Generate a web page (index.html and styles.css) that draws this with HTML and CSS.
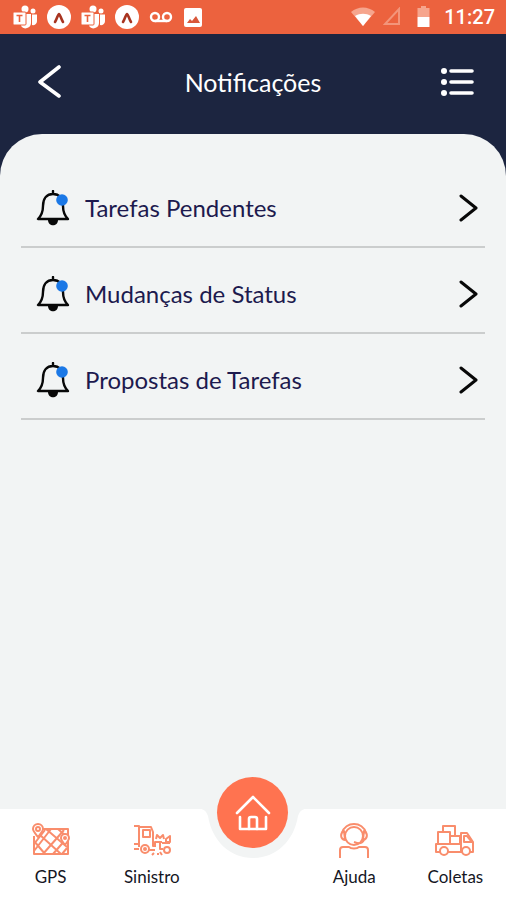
FILE: index.html
```html
<!DOCTYPE html>
<html lang="pt-BR">
<head>
    <meta charset="UTF-8">
    <meta name="viewport" content="width=device-width, initial-scale=1.0">
    <title>Notificações</title>
    <link rel="stylesheet" href="styles.css">
</head>
<body>
    <svg class="sprite" aria-hidden="true">
        <symbol id="teams" viewBox="0 0 24 24">
            <circle cx="12" cy="4" r="3.5" fill="#fff"/>
            <circle cx="20" cy="6" r="2.5" fill="#fff"/>
            <path d="M10 9h8v9a5.500 5.500 0 0 1-10 3z" fill="#fff"/>
            <path d="M19 9.500h5V16a4 4 0 0 1-5 4z" fill="#fff"/>
            <rect x="0" y="7" width="13" height="13" rx="1" fill="#fff" stroke="#ec623e"/>
            <path d="M3.500 10.500h6M6.500 10.500v6.500" stroke="#ec623e" stroke-width="1.600" fill="none"/>
        </symbol>
        <symbol id="expo" viewBox="0 0 24 24">
            <circle cx="12" cy="12" r="12" fill="#fff"/>
            <path d="M8 17c2-3 3-8 4-8s2 5 4 8" fill="none" stroke="#a83420" stroke-width="2.600" stroke-linecap="round" stroke-linejoin="round"/>
        </symbol>
        <symbol id="bell" viewBox="0 0 34 36">
            <path d="M17 1v3M2 29h30c-4-4-5-7-5-13C27 8 23 4 17 4S7 8 7 16c0 6-1 9-5 13z" fill="none" stroke="#080808" stroke-width="2.400" stroke-linecap="round" stroke-linejoin="round"/>
            <path d="M12 30h10c0 7-10 7-10 0z" fill="#080808"/>
            <circle cx="26" cy="10" r="5.800" fill="#1b78e6"/>
        </symbol>
        <symbol id="chevron" viewBox="0 0 20 28">
            <path d="M3 2l15 12L3 26" fill="none" stroke="currentColor" stroke-width="3" stroke-linecap="round" stroke-linejoin="round"/>
        </symbol>
    </svg>

    <div class="status-bar">
        <div class="status-icons">
            <svg width="24" height="24"><use href="#teams"/></svg>
            <svg width="24" height="24"><use href="#expo"/></svg>
            <svg width="24" height="24"><use href="#teams"/></svg>
            <svg width="24" height="24"><use href="#expo"/></svg>
            <svg width="24" height="24" viewBox="0 0 24 24" fill="none" stroke="#fff" stroke-width="2.400">
                <circle cx="6" cy="12" r="4"/>
                <circle cx="18" cy="12" r="4"/>
                <path d="M6 16h12"/>
            </svg>
            <svg width="20" height="24" viewBox="0 0 20 24">
                <rect x="1" y="3" width="18" height="19" rx="2" fill="#fff"/>
                <path d="M4 18l3-4 2 2 4-5 4 7z" fill="#d9573a"/>
            </svg>
        </div>
        <div class="status-info">
            <svg width="24" height="20" viewBox="0 0 24 20">
                <path d="M0 5C7-1 17-1 24 5L12 19z" fill="#f6a58d"/>
                <path d="M4 9c5-3 11-3 16 0l-8 10z" fill="#fff"/>
            </svg>
            <svg width="18" height="20" viewBox="0 0 18 20">
                <path d="M16 2v15H2z" fill="none" stroke="#f3957a" stroke-width="2"/>
            </svg>
            <svg class="battery" width="13" height="22" viewBox="0 0 13 22">
                <path d="M4 0h5v2h3.500v9H.500V2H4z" fill="#f6a58d"/>
                <path d="M.500 11h12v10H.500z" fill="#fff"/>
            </svg>
            <time class="clock">11:27</time>
        </div>
    </div>

    <header class="header">
        <button class="icon-button" type="button" aria-label="Voltar">
            <svg width="24" height="36" viewBox="0 0 24 36" fill="none" stroke="#fff" stroke-width="3.600" stroke-linecap="round" stroke-linejoin="round">
                <path d="M22 3L3 18l19 14"/>
            </svg>
        </button>
        <h1 class="title">Notificações</h1>
        <button class="icon-button" type="button" aria-label="Menu">
            <svg width="34" height="30" viewBox="0 0 34 30" fill="#fff">
                <circle cx="4" cy="4" r="3"/>
                <circle cx="4" cy="15" r="3"/>
                <circle cx="4" cy="26" r="3"/>
                <path d="M11 4h21M11 15h21M11 26h21" stroke="#fff" stroke-width="3.600" stroke-linecap="round"/>
            </svg>
        </button>
    </header>

    <main class="panel">
        <ul class="list">
            <li>
                <a class="row" href="#pendentes">
                    <svg width="34" height="36"><use href="#bell"/></svg>
                    <span class="label">Tarefas Pendentes</span>
                    <svg class="chevron" width="20" height="28"><use href="#chevron"/></svg>
                </a>
            </li>
            <li>
                <a class="row" href="#status">
                    <svg width="34" height="36"><use href="#bell"/></svg>
                    <span class="label">Mudanças de Status</span>
                    <svg class="chevron" width="20" height="28"><use href="#chevron"/></svg>
                </a>
            </li>
            <li>
                <a class="row" href="#propostas">
                    <svg width="34" height="36"><use href="#bell"/></svg>
                    <span class="label">Propostas de Tarefas</span>
                    <svg class="chevron" width="20" height="28"><use href="#chevron"/></svg>
                </a>
            </li>
        </ul>
    </main>

    <nav class="tabs">
        <a class="tab" href="#gps">
            <svg width="40" height="36" viewBox="0 0 40 36">
                <path d="M8 6h29v25H3V13" stroke-width="2"/>
                <path d="M3 21l11-14M3 28L20 6M12 31L33 7M22 31l14-16M31 31l5-6M9 12l21 19M15 6l21 18M3 18l11 13M27 6l9 8"/>
                <path d="M7 14C3 9 2 8 2 6a5 5 0 0 1 10 0c0 2-1 3-5 8z" fill="#fff"/>
                <circle cx="7" cy="6" r="2"/>
                <path d="M34 22c-3-4-4-5-4-7a4 4 0 0 1 8 0c0 2-1 3-4 7z" fill="#fff"/>
                <circle cx="34" cy="15" r="1"/>
            </svg>
            GPS
        </a>
        <a class="tab" href="#sinistro">
            <svg width="40" height="36" viewBox="0 0 40 36">
                <path d="M2 3h5v18H2M7 4h12l2 5v14h3M7 21v3M2 26h5M17 27h6"/>
                <path d="M11 7h7v7h-7z"/>
                <circle cx="13" cy="26" r="4"/>
                <circle cx="13" cy="26" r="1"/>
                <path d="M24 16l1-4 3 3 3-3 1 4M23 24v-5h7M28 19v7h3M38 13l-4 3v3h4zM30 20h8"/>
                <circle cx="35" cy="27" r="3"/>
                <path d="M20 32l2-2M25 31h2M28 29l2 3"/>
            </svg>
            Sinistro
        </a>
        <div class="home-cell">
            <svg class="notch" width="106" height="50" viewBox="0 0 106 50">
                <path d="M0 0c4 0 6 2 8 7 4 25 22 42 45 42s41-17 45-42c2-5 4-7 8-7z" fill="#f2f4f4"/>
            </svg>
            <button class="home" type="button" aria-label="Início">
                <svg width="36" height="38" viewBox="0 0 36 38" fill="none" stroke="#fff" stroke-width="2.600" stroke-linecap="round" stroke-linejoin="round">
                    <path d="M2 19L18 3l16 16"/>
                    <path d="M5 23v12h26V23"/>
                    <path d="M14 35V25q0-2 2-2h4q2 0 2 2v10"/>
                </svg>
            </button>
        </div>
        <a class="tab" href="#ajuda">
            <svg width="40" height="36" viewBox="0 0 40 36">
                <circle cx="20" cy="13" r="9"/>
                <path d="M8 10C11-2 29-2 32 10"/>
                <path d="M10 8c-4 2-4 8 1 9zM30 8c4 2 4 8-1 9zM30 17c-2 4-5 4-10 2"/>
                <path d="M6 35v-8c0-2 1-3 3-3h6c2 2 8 2 10 0h6c2 0 3 1 3 3v8"/>
            </svg>
            Ajuda
        </a>
        <a class="tab" href="#coletas">
            <svg width="40" height="36" viewBox="0 0 40 36">
                <path d="M3 21V9h12v12M15 13h10v8M8 9V3h12v10"/>
                <path d="M5 29H1v-8h25M13 29h14M26 29V10h6l6 9v10h-3"/>
                <path d="M29 13v6h8l-5-6z"/>
                <circle cx="9" cy="28" r="4"/>
                <circle cx="31" cy="28" r="4"/>
            </svg>
            Coletas
        </a>
    </nav>
</body>
</html>
```

FILE: styles.css
```css
* {
    box-sizing: border-box;
}
body {
    margin: 0;
    min-height: 100vh;
    display: flex;
    flex-direction: column;
    background-color: #1c2540;
    font-family: Lato, sans-serif;
}
.sprite {
    position: absolute;
    width: 0;
    height: 0;
}
svg {
    display: block;
    flex-shrink: 0;
}
.status-bar {
    display: flex;
    justify-content: space-between;
    align-items: center;
    height: 34px;
    padding: 0 11px 0 13px;
    background-color: #ec623e;
}
.status-icons {
    display: flex;
    align-items: center;
    gap: 10px;
}
.status-info {
    display: flex;
    align-items: center;
    gap: 8px;
}
.battery {
    margin: 0 6px 0 8px;
}
.clock {
    color: #fff;
    font-family: Roboto, sans-serif;
    font-size: 20px;
    font-weight: 500;
    line-height: 24px;
}
.header {
    display: flex;
    justify-content: space-between;
    align-items: center;
    height: 100px;
    padding: 0 26px 4px;
}
.icon-button {
    display: flex;
    justify-content: center;
    width: 46px;
    padding: 0;
    border: none;
    background: none;
    cursor: pointer;
}
.title {
    margin: 0;
    color: #fff;
    font-size: 25px;
    font-weight: 400;
    line-height: 32px;
}
.panel {
    flex: 1;
    padding: 28px 21px;
    border-radius: 42px 42px 0 0;
    background-color: #f2f4f4;
}
.list {
    margin: 0;
    padding: 0;
    list-style: none;
}
.row {
    display: flex;
    align-items: center;
    min-height: 86px;
    padding: 8px 7px 0 15px;
    border-bottom: 2px solid #cbcdcd;
    color: #1d1a4e;
    font-size: 24px;
    line-height: 30px;
    text-decoration: none;
}
.label {
    flex: 1;
    margin-left: 15px;
}
.chevron {
    color: #080808;
}
.tabs {
    display: grid;
    grid-template-columns: repeat(5, 1fr);
    min-height: 91px;
    background-color: #fff;
}
.tab {
    display: flex;
    flex-direction: column;
    align-items: center;
    gap: 8px;
    padding-top: 14px;
    color: #15161f;
    font-size: 17px;
    line-height: 20px;
    text-decoration: none;
}
.tab svg {
    fill: none;
    stroke: #f98d6c;
    stroke-width: 2;
    stroke-linejoin: round;
}
.home-cell {
    position: relative;
    display: flex;
    justify-content: center;
}
.notch {
    position: absolute;
    top: 0;
}
.home {
    position: absolute;
    top: -32px;
    display: flex;
    align-items: center;
    justify-content: center;
    width: 71px;
    height: 71px;
    padding: 0;
    border: none;
    border-radius: 50%;
    background-color: #ff7350;
    cursor: pointer;
}
```
